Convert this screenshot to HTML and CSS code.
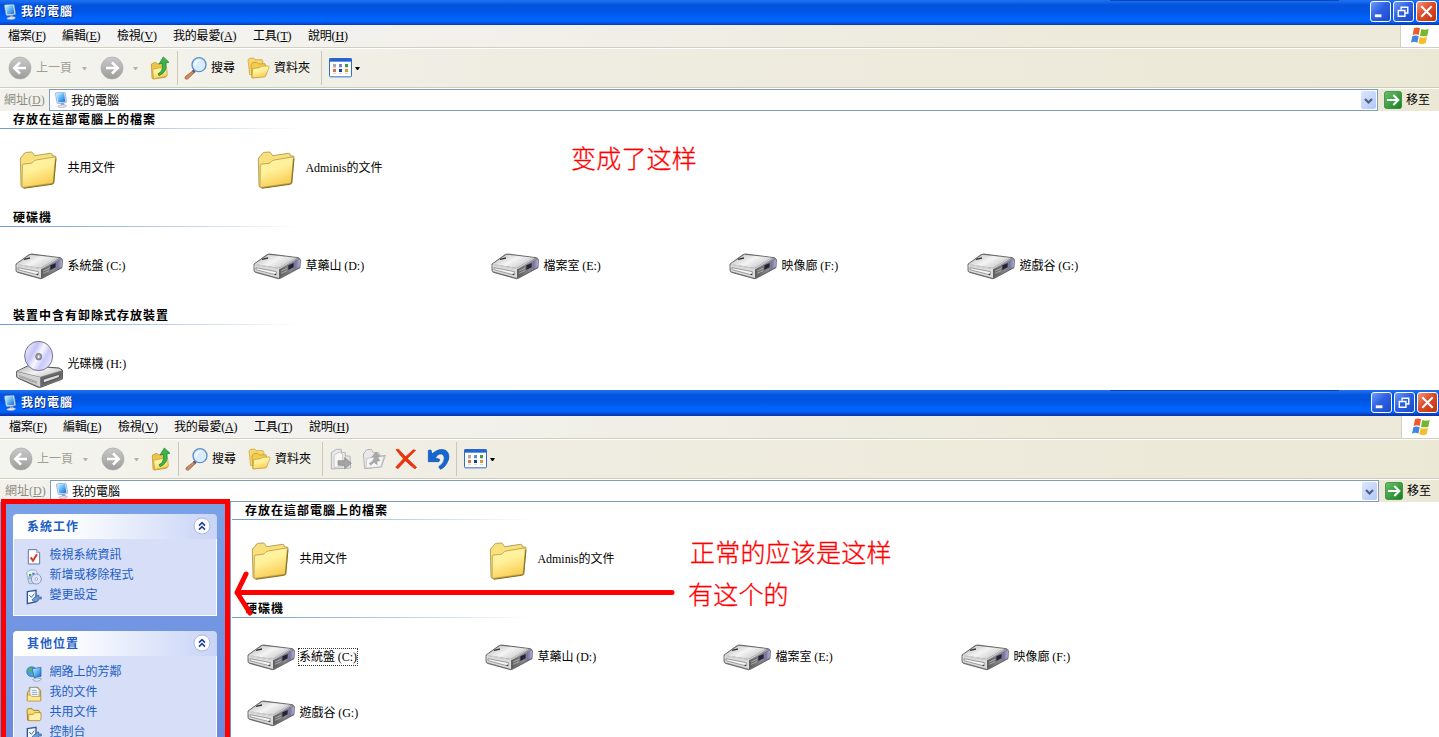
FILE: index.html
```html
<!DOCTYPE html>
<html lang="zh-Hant">

<head>
    <meta charset="UTF-8">
    <meta name="viewport" content="width=device-width, initial-scale=1.0">
    <title>我的電腦</title>
    <link rel="stylesheet" href="styles.css">
</head>

<body>
    <!-- Icon sprite -->
    <svg class="sprite" width="0" height="0">
        <defs>
            <linearGradient id="gFolder" x1="0" y1="0" x2="0.4" y2="1">
                <stop offset="0" stop-color="#fff6a8" />
                <stop offset="0.5" stop-color="#fff09a" />
                <stop offset="1" stop-color="#f9cf55" />
            </linearGradient>
            <linearGradient id="gTop" x1="0" y1="0" x2="1" y2="0.6">
                <stop offset="0" stop-color="#b4b4b4" />
                <stop offset="0.55" stop-color="#f4f4f4" />
                <stop offset="1" stop-color="#c8c8cc" />
            </linearGradient>
            <linearGradient id="gSide" x1="0" y1="0" x2="1" y2="0">
                <stop offset="0" stop-color="#5c5c5c" />
                <stop offset="0.6" stop-color="#8a8a8a" />
                <stop offset="0.8" stop-color="#77749c" />
                <stop offset="1" stop-color="#b4b0e0" />
            </linearGradient>
            <linearGradient id="gDisc" x1="0" y1="0.2" x2="1" y2="0.8">
                <stop offset="0" stop-color="#f4f4ff" />
                <stop offset="0.3" stop-color="#c3c3f5" />
                <stop offset="0.5" stop-color="#f8f8ff" />
                <stop offset="0.7" stop-color="#c9c9f8" />
                <stop offset="1" stop-color="#f0f0fc" />
            </linearGradient>
            <linearGradient id="gGray" x1="0" y1="0" x2="0" y2="1">
                <stop offset="0" stop-color="#c9c9c9" />
                <stop offset="1" stop-color="#9c9c9c" />
            </linearGradient>
            <linearGradient id="gScreen" x1="0" y1="0" x2="1" y2="1">
                <stop offset="0" stop-color="#d6f0ff" />
                <stop offset="0.5" stop-color="#5bb4f5" />
                <stop offset="1" stop-color="#1a62d0" />
            </linearGradient>
            <linearGradient id="gGo" x1="0" y1="0" x2="1" y2="1">
                <stop offset="0" stop-color="#6cc06c" />
                <stop offset="1" stop-color="#12801c" />
            </linearGradient>
        </defs>

        <symbol id="folder" viewBox="0 0 144 144">
            <path d="M16 45Q17 39 22 37L29 27Q31 25 35 25L49 24Q52 24 54 28L59 35L106 28Q112 27 112 35L123 37L116 119L24 131Q18 130 18 124Z" fill="#f8e07c" stroke="#a8924a" stroke-width="2.5" />
            <path d="M22 63Q23 60 27 60L48 58Q52 57 55 53Q58 49 64 48L117 39Q122 38 121 43L115 113Q115 117 111 118L27 130Q21 131 21 126Z" fill="url(#gFolder)" stroke="#b89a44" stroke-width="2.5" />
            <path d="M123 44L116 117Q115 119 110 121L26 133" fill="none" stroke="#86701f" stroke-width="3" />
        </symbol>

        <symbol id="drive" viewBox="0 0 144 144">
            <path d="M3 66L42 38Q46 36 50 36L136 47Q142 49 142 54L141 77L82 109Q77 111 72 109L7 91Q3 89 3 85Z" fill="#707070" stroke="#5a5a5a" stroke-width="2.5" />
            <path d="M5 66L46 38L128 47L78 78Z" fill="url(#gTop)" />
            <path d="M128 47L140 50L82 83L78 78Z" fill="#98989e" />
            <path d="M4 68L78 81L78 108L5 88Z" fill="#dadada" />
            <path d="M79 82L141 52L140 75L79 108Z" fill="url(#gSide)" />
            <path d="M9 77L70 89V99L9 83Z" fill="#f6f6f6" stroke="#777" stroke-width="2" />
            <path d="M106 70L122 63L122 76L106 84Z" fill="#23233a" />
            <path d="M84 87L102 79M84 94L102 86" stroke="#c8c8c8" stroke-width="2" />
            <path d="M27 52L45 48" stroke="#333" stroke-width="4" />
            <path d="M5 67L79 80L128 49" stroke="#fff" stroke-width="2" fill="none" />
            <path d="M65 95h4v4h-4z" fill="#333" />
        </symbol>

        <symbol id="cdrom" viewBox="0 0 144 144">
            <path d="M5 94L40 77L132 84L143 91L142 117L77 142Q73 143 70 142L8 114Q5 112 5 108Z" fill="#8a8a8a" stroke="#555" stroke-width="3" />
            <path d="M7 94L40 79L132 86L140 91L76 110Z" fill="url(#gTop)" />
            <path d="M6 96L75 112L75 140L8 112Z" fill="#d2d2d2" />
            <path d="M77 112L141 93L140 115L77 140Z" fill="#686868" />
            <path d="M85 118L133 103L133 112L85 129Z" fill="#ddd" stroke="#333" stroke-width="2" />
            <path d="M12 106L66 126M12 110L66 130" stroke="#888" stroke-width="2" />
            <ellipse cx="71" cy="48" rx="42" ry="44" fill="url(#gDisc)" stroke="#74748c" stroke-width="3" />
            <ellipse cx="71" cy="50" rx="9" ry="10" fill="#9a9aa4" stroke="#666" stroke-width="2" />
            <ellipse cx="71" cy="50" rx="3" ry="4" fill="#fff" />
        </symbol>

        <symbol id="pc" viewBox="0 0 42 48">
            <path d="M4 5Q4 2 8 2L30 1Q33 1 34 4L38 29Q38 32 35 32L13 35Q10 35 9 32Z" fill="#cfe3f7" stroke="#5b8cc8" stroke-width="1.5" />
            <path d="M8 5L30 3L34 29L13 31Z" fill="url(#gScreen)" />
            <path d="M20 34L29 33L32 40L22 42Z" fill="#8f9dbd" />
            <path d="M12 42Q22 36 36 39Q39 41 36 44Q26 48 14 46Q10 44 12 42Z" fill="#e4e6ee" stroke="#8e99b0" stroke-width="1.5" />
        </symbol>

        <symbol id="back" viewBox="0 0 72 72">
            <circle cx="36" cy="36" r="33" fill="url(#gGray)" stroke="#a9a9a9" stroke-width="2" />
            <path d="M54 36H20M36 19L19 36L36 53" fill="none" stroke="#fff" stroke-width="8" />
        </symbol>
        <symbol id="forward" viewBox="0 0 72 72">
            <circle cx="36" cy="36" r="33" fill="url(#gGray)" stroke="#a9a9a9" stroke-width="2" />
            <path d="M18 36H52M36 19L53 36L36 53" fill="none" stroke="#fff" stroke-width="8" />
        </symbol>

        <symbol id="up" viewBox="0 0 60 72">
            <path d="M4 27Q4 23 8 22L18 19L23 24L44 20L50 58L46 64L10 69Q6 69 6 65Z" fill="#ecc64c" stroke="#b28d22" stroke-width="2" />
            <path d="M8 40L44 32Q49 31 50 36L52 56Q52 60 48 61L11 68Z" fill="url(#gFolder)" stroke="#c39a2c" stroke-width="2" />
            <path d="M24 53Q40 48 37 22L27 24L40 3L57 19L48 20Q53 48 27 59Z" fill="#3db54a" stroke="#187a24" stroke-width="2" />
        </symbol>

        <symbol id="search" viewBox="0 0 75 72">
            <path d="M29 45L34 50L14 69Q9 71 6 67Q5 64 8 61Z" fill="#d08a5c" stroke="#8c5a3c" stroke-width="2" />
            <path d="M29 42L36 49" stroke="#557" stroke-width="6" />
            <circle cx="48" cy="26" r="21" fill="#d7edfb" stroke="#5f8fc4" stroke-width="4" />
            <path d="M34 25Q36 11 51 11Q42 16 37 32Z" fill="#fff" />
        </symbol>

        <symbol id="folders" viewBox="0 0 69 66">
            <path d="M3 8L8 4L20 3L24 8L45 8L48 14L44 50L8 53Z" fill="#f6d768" stroke="#c29c30" stroke-width="2" />
            <path d="M12 24L17 17L29 16L34 21L54 20L56 27L56 56L15 63Z" fill="#f2cb52" stroke="#b98f26" stroke-width="2" />
            <path d="M17 35L37 32L43 28L64 27Q67 28 66 31L56 57Q55 60 51 60L15 63Z" fill="url(#gFolder)" stroke="#c0972a" stroke-width="2" />
        </symbol>

        <symbol id="views" viewBox="0 0 69 60">
            <rect x="1.5" y="1.5" width="66" height="55" rx="3" fill="#fff" stroke="#2e6fc4" stroke-width="3" />
            <rect x="1" y="1" width="67" height="10" fill="#2464cc" />
            <path d="M12 18h9v9h-9z" fill="#b0a8b8" /><path d="M30 18h9v9h-9z" fill="#6a8ad0" /><path d="M48 18h9v9h-9z" fill="#3a9c3c" />
            <path d="M12 33h9v9h-9z" fill="#e0704c" /><path d="M30 33h9v9h-9z" fill="#1c3c9c" /><path d="M48 33h9v9h-9z" fill="#d09a34" />
            <path d="M12 46h9M30 46h9M48 46h9M12 29h9M30 29h9M48 29h9" stroke="#bbb" stroke-width="2" />
        </symbol>

        <symbol id="moveto" viewBox="0 0 66 66">
            <path d="M4 14L19 4L34 4L34 13L46 14L46 24L60 24L62 60L4 63Z" fill="#e9e9e9" stroke="#a8a8a8" stroke-width="2.5" />
            <path d="M12 22L28 12L38 20L38 56L12 58Z" fill="#f6f6f6" stroke="#b4b4b4" stroke-width="2" />
            <path d="M24 38H44V28L64 46L44 62V52H24Z" fill="#a4a4a4" stroke="#858585" stroke-width="2" />
        </symbol>
        <symbol id="copyto" viewBox="0 0 72 66">
            <path d="M4 18L14 5L28 4L34 14L50 14L54 24L70 22L58 57L8 62Z" fill="#e8e8e8" stroke="#aaa" stroke-width="2.5" />
            <path d="M14 32L36 26L66 26L56 56L12 60Z" fill="#f6f6f6" stroke="#b4b4b4" stroke-width="2" />
            <path d="M22 46Q34 42 38 26L29 28L42 12L54 26L46 27L54 38L44 40L46 50L36 43L26 52Z" fill="#a8a8a8" stroke="#8f8f8f" stroke-width="1.5" />
        </symbol>
        <symbol id="delete" viewBox="0 0 66 66">
            <path d="M3 5L10 3Q34 30 65 58L60 63Q26 38 3 5Z" fill="#e8350e" stroke="#e8350e" stroke-width="2" />
            <path d="M55 5L62 7Q36 32 9 62L2 58Q24 30 55 5Z" fill="#e8350e" stroke="#e8350e" stroke-width="2" />
        </symbol>
        <symbol id="undo" viewBox="0 0 72 66">
            <path d="M4 7L12 6L15 18Q36 -2 56 7Q70 18 64 36Q56 58 40 64L35 56Q52 46 52 30Q50 16 38 18Q30 20 25 30L38 34L36 41L4 41Z" fill="#1766cf" stroke="#0d4fae" stroke-width="2" />
        </symbol>

        <symbol id="go" viewBox="0 0 54 54">
            <rect x="1.5" y="1.5" width="51" height="51" rx="6" fill="url(#gGo)" stroke="#1d7a2a" stroke-width="2" />
            <path d="M9 27H42M28 12L43 27L28 42" fill="none" stroke="#fff" stroke-width="6" />
        </symbol>

        <symbol id="flag" viewBox="0 0 60 54">
            <path d="M12 4Q20 -1 30 4L26 24Q18 20 8 24Z" fill="#ee5a2c" />
            <path d="M34 6Q44 11 56 6L52 26Q41 30 30 26Z" fill="#74b62c" />
            <path d="M7 28Q17 23 26 28L22 47Q13 42 3 47Z" fill="#3f86e0" />
            <path d="M29 30Q40 34 51 30L47 49Q37 54 25 49Z" fill="#f6bd2a" />
        </symbol>

        <symbol id="chevup" viewBox="0 0 54 54">
            <circle cx="27" cy="27" r="24" fill="#fff" stroke="#a9b8e0" stroke-width="3" />
            <path d="M18 26L27 17L36 26M18 38L27 29L36 38" fill="none" stroke="#22409a" stroke-width="5" />
        </symbol>

        <symbol id="sysinfo" viewBox="0 0 48 48">
            <path d="M7 2H32L41 11V45H7Z" fill="#fff" stroke="#66749c" stroke-width="3" />
            <path d="M32 2V11H41" fill="#dfe5f4" stroke="#7a86a8" stroke-width="2" />
            <path d="M14 25L21 35L33 16" fill="none" stroke="#d83a28" stroke-width="6" />
        </symbol>
        <symbol id="addremove" viewBox="0 0 48 48">
            <path d="M2 10L12 3H28L34 12V24H4Z" fill="#e8f0fa" stroke="#7c93b8" stroke-width="2" />
            <path d="M9 15h7v7h-7z" fill="#4aa050" /><path d="M19 11h7v7h-7z" fill="#4a7cc8" />
            <path d="M5 28H22V44H9Z" fill="#c3d6ee" stroke="#7c93b8" stroke-width="2" />
            <circle cx="31" cy="30" r="15" fill="#dbe4f8" stroke="#7b8db8" stroke-width="2.5" />
            <circle cx="31" cy="30" r="4" fill="#fff" stroke="#7b8db8" stroke-width="2" />
        </symbol>
        <symbol id="settings" viewBox="0 0 48 48">
            <path d="M4 8L30 4V38L4 44Z" fill="#f4f8fe" stroke="#2f5594" stroke-width="4" />
            <path d="M10 18L16 25L25 14" fill="none" stroke="#3b6cb4" stroke-width="3" />
            <path d="M18 33L24 26L30 24L33 19L38 18V24H46V30H38L36 36L28 39Z" fill="#6f9bd6" stroke="#2f5594" stroke-width="2" />
        </symbol>
        <symbol id="network" viewBox="0 0 48 48">
            <circle cx="17" cy="17" r="15" fill="#4a9ce0" stroke="#2d6cb0" stroke-width="2" />
            <path d="M7 9Q15 3 20 8L16 16L9 18ZM14 23L22 20L22 30Z" fill="#5cb85a" />
            <path d="M19 8L45 4V31L24 35Z" fill="url(#gScreen)" stroke="#2d5896" stroke-width="2" />
            <path d="M20 40Q32 33 46 38Q46 44 32 46Q22 46 20 40Z" fill="#e4e8f2" stroke="#8090b0" stroke-width="2" />
        </symbol>
        <symbol id="mydocs" viewBox="0 0 48 48">
            <path d="M4 20L10 12V4H36L44 14V44H4Z" fill="#f2cf5c" stroke="#ad8630" stroke-width="3" />
            <path d="M12 5H33L39 11V32H12Z" fill="#fff" stroke="#7b9ac8" stroke-width="2" />
            <path d="M17 13H32M17 19H34M17 25H34" stroke="#6f94cc" stroke-width="2.5" />
            <path d="M4 27H13L17 31H44V45H4Z" fill="#ffe98e" stroke="#b48c30" stroke-width="2" />
        </symbol>
        <symbol id="smallfolder" viewBox="0 0 48 48">
            <path d="M3 12L6 8H18L22 13H38L41 19V43H5Z" fill="#f8dc74" stroke="#ab8328" stroke-width="3" />
            <path d="M8 25H22L26 20H45V40L41 44H8Z" fill="#fff2a8" stroke="#b08a2c" stroke-width="2.5" />
        </symbol>
    </svg>

    <div class="window first">
        <div class="titlebar">
            <svg class="title-icon"><use href="#pc" /></svg>
            <span class="title">我的電腦</span>
            <div class="controls">
                <button class="ctl"><svg viewBox="0 0 20 20"><path d="M4 14.5h7" stroke="#fff" stroke-width="3" /></svg></button>
                <button class="ctl"><svg viewBox="0 0 20 20"><path d="M7.500 8V5.500h7V11.500H12M4.500 9h7v6h-7zM4 9h8M7 5.500h8" fill="none" stroke="#fff" stroke-width="1.500" /></svg></button>
                <button class="ctl close"><svg viewBox="0 0 20 20"><path d="M4.500 4.500L15.500 15.500M15.500 4.500L4.500 15.500" stroke="#fff" stroke-width="2.200" /></svg></button>
            </div>
        </div>
        <div class="menubar">
            <div class="menus">
                <span>檔案(<u>F</u>)</span><span>編輯(<u>E</u>)</span><span>檢視(<u>V</u>)</span><span>我的最愛(<u>A</u>)</span><span>工具(<u>T</u>)</span><span>說明(<u>H</u>)</span>
            </div>
            <div class="brand"><svg><use href="#flag" /></svg></div>
        </div>
        <div class="toolbar">
            <svg class="nav"><use href="#back" /></svg>
            <span class="tool-text off">上一頁</span>
            <i class="caret off"></i>
            <svg class="nav fwd"><use href="#forward" /></svg>
            <i class="caret off"></i>
            <svg class="up"><use href="#up" /></svg>
            <i class="sep"></i>
            <svg class="search"><use href="#search" /></svg>
            <span class="tool-text">搜尋</span>
            <svg class="folders"><use href="#folders" /></svg>
            <span class="tool-text">資料夾</span>
            <i class="sep wide"></i>
            <svg class="views"><use href="#views" /></svg>
            <i class="caret near"></i>
        </div>
        <div class="addressbar">
            <span class="addr-label">網址(<u>D</u>)</span>
            <div class="addr-box">
                <svg class="addr-icon"><use href="#pc" /></svg>
                <span>我的電腦</span>
                <button class="drop"><svg viewBox="0 0 15 17"><path d="M4 7L7.500 10.500L11 7" fill="none" stroke="#4d6185" stroke-width="2.200" /></svg></button>
            </div>
            <svg class="go"><use href="#go" /></svg>
            <span>移至</span>
        </div>
        <div class="content">
            <h2>存放在這部電腦上的檔案</h2>
            <div class="tiles">
                <div class="tile"><svg><use href="#folder" /></svg><span>共用文件</span></div>
                <div class="tile"><svg><use href="#folder" /></svg><span>Adminis的文件</span></div>
            </div>
            <h2>硬碟機</h2>
            <div class="tiles">
                <div class="tile"><svg><use href="#drive" /></svg><span>系統盤 (C:)</span></div>
                <div class="tile"><svg><use href="#drive" /></svg><span>草藥山 (D:)</span></div>
                <div class="tile"><svg><use href="#drive" /></svg><span>檔案室 (E:)</span></div>
                <div class="tile"><svg><use href="#drive" /></svg><span>映像廊 (F:)</span></div>
                <div class="tile"><svg><use href="#drive" /></svg><span>遊戲谷 (G:)</span></div>
            </div>
            <h2>裝置中含有卸除式存放裝置</h2>
            <div class="tiles">
                <div class="tile"><svg><use href="#cdrom" /></svg><span>光碟機 (H:)</span></div>
            </div>
        </div>
    </div>

    <div class="window second">
        <div class="titlebar">
            <svg class="title-icon"><use href="#pc" /></svg>
            <span class="title">我的電腦</span>
            <div class="controls">
                <button class="ctl"><svg viewBox="0 0 20 20"><path d="M4 14.5h7" stroke="#fff" stroke-width="3" /></svg></button>
                <button class="ctl"><svg viewBox="0 0 20 20"><path d="M7.500 8V5.500h7V11.500H12M4.500 9h7v6h-7zM4 9h8M7 5.500h8" fill="none" stroke="#fff" stroke-width="1.500" /></svg></button>
                <button class="ctl close"><svg viewBox="0 0 20 20"><path d="M4.500 4.500L15.500 15.500M15.500 4.500L4.500 15.500" stroke="#fff" stroke-width="2.200" /></svg></button>
            </div>
        </div>
        <div class="menubar">
            <div class="menus">
                <span>檔案(<u>F</u>)</span><span>編輯(<u>E</u>)</span><span>檢視(<u>V</u>)</span><span>我的最愛(<u>A</u>)</span><span>工具(<u>T</u>)</span><span>說明(<u>H</u>)</span>
            </div>
            <div class="brand"><svg><use href="#flag" /></svg></div>
        </div>
        <div class="toolbar">
            <svg class="nav"><use href="#back" /></svg>
            <span class="tool-text off">上一頁</span>
            <i class="caret off"></i>
            <svg class="nav fwd"><use href="#forward" /></svg>
            <i class="caret off"></i>
            <svg class="up"><use href="#up" /></svg>
            <i class="sep"></i>
            <svg class="search"><use href="#search" /></svg>
            <span class="tool-text">搜尋</span>
            <svg class="folders"><use href="#folders" /></svg>
            <span class="tool-text">資料夾</span>
            <i class="sep wide"></i>
            <svg class="edit"><use href="#moveto" /></svg>
            <svg class="edit copy"><use href="#copyto" /></svg>
            <svg class="edit"><use href="#delete" /></svg>
            <svg class="edit undo"><use href="#undo" /></svg>
            <i class="sep"></i>
            <svg class="views"><use href="#views" /></svg>
            <i class="caret near"></i>
        </div>
        <div class="addressbar">
            <span class="addr-label">網址(<u>D</u>)</span>
            <div class="addr-box">
                <svg class="addr-icon"><use href="#pc" /></svg>
                <span>我的電腦</span>
                <button class="drop"><svg viewBox="0 0 15 17"><path d="M4 7L7.500 10.500L11 7" fill="none" stroke="#4d6185" stroke-width="2.200" /></svg></button>
            </div>
            <svg class="go"><use href="#go" /></svg>
            <span>移至</span>
        </div>
        <div class="panes">
            <aside class="sidebar">
                <section class="panel">
                    <h3>系統工作<svg><use href="#chevup" /></svg></h3>
                    <ul>
                        <li><svg><use href="#sysinfo" /></svg>檢視系統資訊</li>
                        <li><svg><use href="#addremove" /></svg>新增或移除程式</li>
                        <li><svg><use href="#settings" /></svg>變更設定</li>
                    </ul>
                </section>
                <section class="panel">
                    <h3>其他位置<svg><use href="#chevup" /></svg></h3>
                    <ul>
                        <li><svg><use href="#network" /></svg>網路上的芳鄰</li>
                        <li><svg><use href="#mydocs" /></svg>我的文件</li>
                        <li><svg><use href="#smallfolder" /></svg>共用文件</li>
                        <li><svg><use href="#settings" /></svg>控制台</li>
                    </ul>
                </section>
            </aside>
            <div class="content">
                <h2>存放在這部電腦上的檔案</h2>
                <div class="tiles">
                    <div class="tile"><svg><use href="#folder" /></svg><span>共用文件</span></div>
                    <div class="tile"><svg><use href="#folder" /></svg><span>Adminis的文件</span></div>
                </div>
                <h2>硬碟機</h2>
                <div class="tiles">
                    <div class="tile"><svg><use href="#drive" /></svg><span class="focused">系統盤 (C:)</span></div>
                    <div class="tile"><svg><use href="#drive" /></svg><span>草藥山 (D:)</span></div>
                    <div class="tile"><svg><use href="#drive" /></svg><span>檔案室 (E:)</span></div>
                    <div class="tile"><svg><use href="#drive" /></svg><span>映像廊 (F:)</span></div>
                    <div class="tile"><svg><use href="#drive" /></svg><span>遊戲谷 (G:)</span></div>
                </div>
            </div>
        </div>
    </div>

    <!-- Red pen notes over both windows -->
    <div class="note note-top" lang="zh-Hans">变成了这样</div>
    <div class="note note-bottom" lang="zh-Hans">正常的应该是这样</div>
    <div class="note note-last" lang="zh-Hans">有这个的</div>
    <div class="frame"></div>
    <svg class="arrow" viewBox="0 0 444 50"><path d="M5 23.500H440M14 5L5 23.500L18 44" /></svg>
</body>

</html>
```

FILE: styles.css
```css
* {
    box-sizing: border-box;
}

body {
    margin: 0;
    width: 1439px;
    height: 737px;
    overflow: hidden;
    position: relative;
    background: #fff;
    color: #000;
    font-family: "Liberation Serif", "Noto Sans CJK TC", serif;
    font-size: 12px;
    line-height: 16px;
}

svg {
    display: block;
    flex: none;
}

.sprite {
    position: absolute;
}

button {
    padding: 0;
    border: 0;
}

.window {
    display: flex;
    flex-direction: column;
    overflow: hidden;
}

.first {
    height: 390px;
}

.second {
    height: 347px;
}

/* Title bar */
.titlebar {
    display: flex;
    align-items: center;
    flex: none;
    height: 25px;
    padding: 0 2px 2px 3px;
    background:
        linear-gradient(#0846b4, #0846b4) 1110px 0 / 229px 1px no-repeat,
        linear-gradient(#1f72ee 0, #1468ee 2px, #0353dc 5px, #0254e0 10px, #0060f8 17px, #0066ff 21px, #0453dc 23px, #0838b8 25px);
}

.second .titlebar {
    height: 26px;
    padding: 1px 1px 2px 3px;
}

.title-icon {
    width: 14px;
    height: 16px;
}

.title {
    flex: 1;
    margin-left: 4px;
    color: #fff;
    font-weight: bold;
    letter-spacing: 1px;
    text-shadow: 1px 1px 0 #0a2a80;
}

.controls {
    display: flex;
    gap: 2px;
}

.ctl {
    width: 21px;
    height: 21px;
    border: 1px solid #fff;
    border-radius: 3px;
    background: linear-gradient(135deg, #6f9bf8, #2e62e2 45%, #1c4ac8);
}

.ctl.close {
    background: linear-gradient(135deg, #f09a80, #dc4c28 45%, #c03410);
}

/* Menu bar */
.menubar {
    display: flex;
    flex: none;
    height: 23px;
    border-bottom: 1px solid #d2cfc0;
    background: linear-gradient(to right, #f5f5f5, #f1f0ea 35%, #edeadb 75%);
}

.menus {
    display: grid;
    grid-template-columns: 54px 55px 56px 80px 55px auto;
    flex: 1;
    align-items: center;
    justify-content: start;
    padding-left: 8px;
    letter-spacing: -0.2px;
}

.second .menus {
    padding-left: 9px;
}

.brand {
    width: 39px;
    padding: 2px 0 0 9px;
    border-left: 1px solid #d2cfc0;
    background: #fff;
}

.second .brand {
    width: 38px;
}

.brand svg {
    width: 20px;
    height: 18px;
}

/* Toolbar */
.toolbar {
    display: flex;
    align-items: center;
    flex: none;
    height: 40px;
    padding-left: 8px;
    border-top: 1px solid #fff;
    border-bottom: 1px solid #cfccbc;
    background: linear-gradient(to right, #f4f4ef, #efede2 35%, #ece8d6);
}

.second .toolbar {
    padding-left: 9px;
}

.nav {
    width: 24px;
    height: 24px;
}

.tool-text {
    margin-left: 3px;
}

.tool-text.off {
    margin-left: 4px;
    color: #a19f92;
}

.caret {
    width: 5px;
    margin-left: 10px;
    border: solid transparent;
    border-width: 3px 2.5px 0;
    border-top-color: #000;
}

.caret.off {
    border-top-color: #b4b2a6;
}

.caret.near {
    margin-left: 3px;
}

.fwd {
    margin-left: 13px;
}

.fwd + .caret {
    margin-left: 9px;
}

.up {
    width: 20px;
    height: 24px;
    margin-left: 12px;
}

.sep {
    width: 1px;
    height: 34px;
    margin: 0 5px 0 7px;
    background: #cbc8b8;
}

.sep.wide {
    margin: 0 7px 0 11px;
}

.search {
    width: 25px;
    height: 24px;
}

.search + .tool-text {
    margin-left: 3px;
}

.folders {
    width: 23px;
    height: 22px;
    margin-left: 12px;
}

.folders + .tool-text {
    margin-left: 4px;
}

.views {
    width: 23px;
    height: 20px;
}

.edit {
    width: 22px;
    height: 22px;
    margin-right: 10px;
}

.edit.copy {
    width: 24px;
    margin-right: 9px;
}

.edit.undo {
    width: 24px;
    margin-right: -1px;
}

.edit ~ .sep {
    margin: 0 7px 0 6px;
}

/* Address bar */
.addressbar {
    display: flex;
    align-items: center;
    flex: none;
    height: 23px;
    padding: 0 9px 0 4px;
    border-top: 1px solid #fff;
    background: linear-gradient(to right, #f2f1ec, #efede2 35%, #ece8d6);
}

.second .addressbar {
    padding: 0 8px 0 5px;
}

.addr-label {
    width: 45px;
    color: #8d8b80;
}

.addr-box {
    display: flex;
    align-items: center;
    flex: 1;
    height: 22px;
    padding: 0 1px 0 4px;
    border: 1px solid #7f9db9;
    background: #fff;
}

.addr-icon {
    width: 14px;
    height: 16px;
    margin-right: 3px;
}

.addr-box span {
    padding-top: 1px;
}

.drop {
    width: 15px;
    height: 18px;
    margin-left: auto;
    border-radius: 2px;
    background: linear-gradient(135deg, #dce6fe, #b3c8f6);
}

.go {
    width: 18px;
    height: 18px;
    margin: 0 4px 0 6px;
}

/* File area */
.panes {
    display: flex;
    flex: 1;
    min-height: 0;
}

.content {
    flex: 1;
}

.second .content {
    padding-left: 1px;
}

.content h2 {
    height: 18px;
    margin: 0;
    padding: 1px 0 0 13px;
    background: linear-gradient(to right, #6c9cd4, #a8c4e6 45%, #fff) 0 100% / 300px 1px no-repeat;
    font-size: 12px;
    letter-spacing: 1px;
}

.tiles {
    display: grid;
    grid-template-columns: repeat(5, 238px);
    grid-auto-rows: 56px;
    padding: 11px 0 13px 15px;
}

.second .tiles {
    grid-template-columns: repeat(4, 238px);
}

.tile {
    display: flex;
    align-items: center;
}

.tile svg {
    width: 48px;
    height: 48px;
}

.tile span {
    padding: 0 1px;
    margin-left: 3.5px;
    letter-spacing: -0.05px;
}

.tile .focused {
    margin-left: 3px;
    border: 1px dotted #333;
    padding: 0;
}

/* Task pane */
.sidebar {
    width: 231px;
    padding: 12px 14px 0 13px;
    background: linear-gradient(#7ba2e7, #6b8add);
}

.panel {
    margin-bottom: 15px;
}

.panel h3 {
    display: flex;
    align-items: center;
    justify-content: space-between;
    height: 25px;
    margin: 0;
    padding: 1px 6px 0 14px;
    border-radius: 4px 4px 0 0;
    background: linear-gradient(to right, #fff 25%, #c8d4f7);
    color: #215dc6;
    font-size: 12px;
    letter-spacing: 1px;
}

.panel h3 svg {
    width: 18px;
    height: 18px;
    margin-top: -3px;
}

.panel ul {
    margin: 0;
    padding: 6px 12px 9px;
    border: 1px solid #fff;
    border-top: 0;
    background: #d6dff7;
    list-style: none;
}

.panel li {
    display: flex;
    align-items: center;
    height: 20px;
    color: #215dc6;
}

.panel li svg {
    width: 16px;
    height: 16px;
    margin: 3px 7.5px 0 0;
}

.panel:first-child ul {
    height: 77px;
}

/* Notes */
.note {
    position: absolute;
    color: #f00;
    font-family: "Noto Sans CJK SC", sans-serif;
    font-size: 25px;
    font-weight: 300;
    line-height: 30px;
    letter-spacing: 0.2px;
    white-space: nowrap;
    -webkit-text-stroke: 0.3px #f00;
}

.note-top {
    left: 571px;
    top: 142px;
}

.note-bottom {
    left: 690px;
    top: 536px;
}

.note-last {
    left: 688px;
    top: 578px;
}

.frame {
    position: absolute;
    left: 1px;
    top: 499px;
    width: 229px;
    height: 250px;
    border: 5px solid #f00;
}

.arrow {
    position: absolute;
    left: 232px;
    top: 569px;
    width: 444px;
    height: 50px;
    fill: none;
    stroke: #f00;
    stroke-width: 5;
    stroke-linecap: round;
    stroke-linejoin: round;
}
```
